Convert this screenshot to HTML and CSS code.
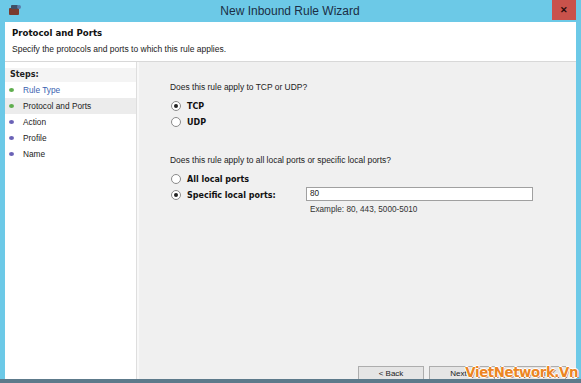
FILE: index.html
```html
<!DOCTYPE html>
<html lang="en">
<head>
    <meta charset="UTF-8">
    <title>New Inbound Rule Wizard</title>
    <link rel="stylesheet" href="styles.css">
</head>
<body>
    <div class="window">
        <div class="titlebar">
            <svg class="app-icon" width="12" height="11" viewBox="0 0 12 11">
                <rect x="0" y="4" width="10" height="7" rx="1" fill="#7a3b2e"/>
                <rect x="2" y="1" width="7" height="4" rx="1" fill="#3f4f66"/>
                <circle cx="10" cy="3" r="2" fill="#5a7aa8"/>
            </svg>
            <div class="title">New Inbound Rule Wizard</div>
            <div class="close">&#x2715;</div>
        </div>
        <div class="header">
            <div class="header-title">Protocol and Ports</div>
            <div class="header-sub">Specify the protocols and ports to which this rule applies.</div>
        </div>
        <div class="main">
            <div class="steps">
                <div class="steps-label">Steps:</div>
                <div class="step current-link"><span class="dot green"></span>Rule Type</div>
                <div class="step selected"><span class="dot green"></span>Protocol and Ports</div>
                <div class="step"><span class="dot purple"></span>Action</div>
                <div class="step"><span class="dot purple"></span>Profile</div>
                <div class="step"><span class="dot purple"></span>Name</div>
            </div>
            <div class="content">
                <div class="question">Does this rule apply to TCP or UDP?</div>
                <div class="options">
                    <label class="option"><span class="radio checked"></span>TCP</label>
                    <label class="option"><span class="radio"></span>UDP</label>
                </div>
                <div class="question second">Does this rule apply to all local ports or specific local ports?</div>
                <div class="options">
                    <label class="option"><span class="radio"></span>All local ports</label>
                    <div class="port-row">
                        <label class="option port-label"><span class="radio checked"></span>Specific local ports:</label>
                        <div class="port-field">
                            <div class="input">80</div>
                            <div class="example">Example: 80, 443, 5000-5010</div>
                        </div>
                    </div>
                </div>
                <div class="buttons">
                    <div class="button">&lt; Back</div>
                    <div class="button">Next &gt;</div>
                    <div class="button">Cancel</div>
                </div>
            </div>
        </div>
        <div class="bottom-edge"></div>
        <div class="watermark">VietNetwork.Vn</div>
    </div>
</body>
</html>
```

FILE: styles.css
```css
body, html {
    margin: 0;
    padding: 0;
    width: 581px;
    height: 383px;
    overflow: hidden;
    font-family: "Liberation Sans", Arial, sans-serif;
}
.window {
    position: relative;
    height: 383px;
    display: flex;
    flex-direction: column;
    background: #6cc9e7;
    padding: 0 5px;
    box-sizing: border-box;
}
.titlebar {
    height: 22px;
    display: flex;
    align-items: center;
}
.app-icon {
    margin-left: 4px;
    margin-top: -3px;
}
.title {
    flex: 1;
    text-align: center;
    font-size: 12px;
    color: #1b2e45;
    padding-left: 7px;
}
.close {
    width: 24px;
    height: 20px;
    margin-top: -2px;
    background: #c9524b;
    color: #2a0a0a;
    font-size: 9px;
    font-weight: bold;
    display: flex;
    justify-content: center;
    align-items: center;
}
.header {
    background: #fff;
    height: 40px;
    padding: 6px 0 0 7px;
    box-sizing: border-box;
    border-bottom: 1px solid #d8d8d8;
}
.header-title {
    font-family: "DejaVu Sans", sans-serif;
    font-weight: bold;
    font-size: 8.6px;
    color: #111;
}
.header-sub {
    font-size: 8.5px;
    color: #222;
    margin-top: 6px;
}
.main {
    flex: 1;
    display: flex;
    min-height: 0;
    overflow: hidden;
    background: #f0f0f0;
}
.steps {
    width: 132px;
    background: #fff;
    border-right: 1px solid #dedede;
    padding-top: 6px;
    box-sizing: border-box;
}
.steps-label {
    font-family: "DejaVu Sans", sans-serif;
    font-weight: bold;
    font-size: 8px;
    color: #222;
    padding: 2px 0 3px 5px;
    background: #f4f4f4;
}
.step {
    height: 16px;
    display: flex;
    align-items: center;
    font-size: 8.3px;
    color: #222;
    padding-left: 4px;
}
.step.current-link {
    color: #3a5fb0;
}
.step.selected {
    background: #ececec;
}
.dot {
    width: 5px;
    height: 4px;
    border-radius: 50%;
    margin-right: 9px;
}
.dot.green {
    background: #5fae4e;
}
.dot.purple {
    background: #6a62b6;
}
.content {
    flex: 1;
    border-left: 2px solid #f8f8f8;
    padding: 20px 0 0 31px;
    display: flex;
    flex-direction: column;
}
.question {
    font-size: 8.45px;
    color: #222;
}
.question.second {
    margin-top: 25px;
}
.options {
    display: flex;
    flex-direction: column;
    margin: 6px 0 0 1px;
}
.option {
    height: 16px;
    display: flex;
    align-items: center;
    font-family: "DejaVu Sans", sans-serif;
    font-weight: bold;
    font-size: 8px;
    color: #111;
}
.radio {
    width: 8px;
    height: 8px;
    border: 1px solid #8a8a8a;
    border-radius: 50%;
    background: #fff;
    margin-right: 6px;
    position: relative;
}
.radio.checked::after {
    content: "";
    position: absolute;
    left: 2px;
    top: 2px;
    width: 4px;
    height: 4px;
    border-radius: 50%;
    background: #222;
}
.port-row {
    display: flex;
}
.port-label {
    width: 135px;
}
.input {
    width: 222px;
    height: 12px;
    border: 1px solid #a0a0a0;
    background: #fff;
    font-size: 8.2px;
    padding-left: 3px;
    line-height: 12px;
    color: #222;
}
.example {
    font-size: 8.2px;
    color: #333;
    margin: 4px 0 0 4px;
}
.buttons {
    margin-top: auto;
    margin-bottom: -3px;
    display: flex;
    justify-content: flex-end;
    gap: 5px;
    padding-right: 10px;
}
.button {
    width: 64px;
    height: 14px;
    border: 1px solid #adadad;
    background: #e5e5e5;
    font-size: 8px;
    color: #222;
    text-align: center;
    line-height: 14px;
}
.bottom-edge {
    height: 4px;
    background: #5d7a8b;
    margin: 0 -5px;
}
.watermark {
    position: absolute;
    right: 3px;
    bottom: 3px;
    font-family: "DejaVu Sans Condensed", "DejaVu Sans", sans-serif;
    font-stretch: condensed;
    font-weight: bold;
    font-size: 14.8px;
    color: #ec8523;
    letter-spacing: -0.4px;
    text-shadow: 1px 0 #fff, -1px 0 #fff, 0 1px #fff, 0 -1px #fff, 1px 1px #8a4a10;
}
```
